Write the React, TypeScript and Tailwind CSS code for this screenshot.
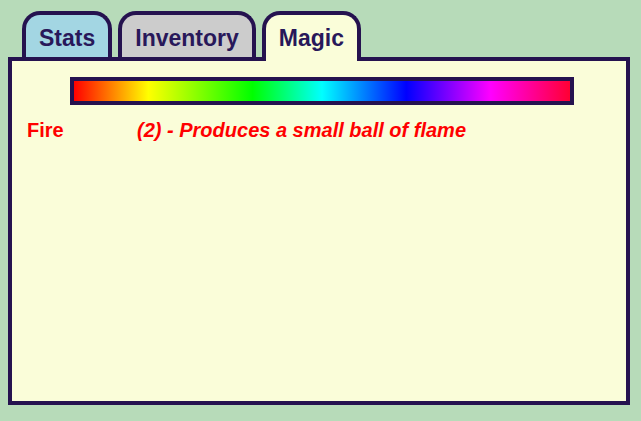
import React from 'react'

type Tab = { name: string; bg: string; active?: boolean }

const tabs: Tab[] = [
  { name: 'Stats', bg: 'bg-[#a3d6e3]' },
  { name: 'Inventory', bg: 'bg-[#cccccc]' },
  { name: 'Magic', bg: 'bg-[#fafdd9]', active: true },
]

const spells = [{ name: 'Fire', cost: 2, text: 'Produces a small ball of flame' }]

export default function App() {
  return (
    <div className="h-[421px] w-[641px] bg-[#b7dbb9] pl-[8px] pt-[11px] font-['Liberation_Sans',Arial,sans-serif]">
      <div className="ml-[14px] flex h-[46px] items-start gap-[6px]">
        {tabs.map((tab) => (
          <div
            key={tab.name}
            className={`relative z-10 rounded-t-[18px] border-4 border-b-0 border-[#25124f] px-[13px] pt-[10px] text-[23px] font-bold leading-[26px] text-[#28185a] ${tab.bg} ${
              tab.active ? 'h-[50px]' : 'h-[46px]'
            }`}
          >
            {tab.name}
          </div>
        ))}
      </div>

      <div className="h-[348px] w-[622px] border-4 border-[#25124f] bg-[#fafdd9]">
        <div className="ml-[58px] mt-[16px] h-[28px] w-[504px] border-4 border-[#25124f] bg-[linear-gradient(to_right,#ff0000_0%,#ffff00_15%,#00ff00_36%,#00ffff_50%,#0000ff_67%,#ff00ff_84%,#ff0033_100%)]" />

        {spells.map((spell) => (
          <div key={spell.name} className="mt-[14px] flex text-[20px] font-bold leading-[23px] text-[#ff0000]">
            <span className="ml-[15px] w-[110px]">{spell.name}</span>
            <span className="italic">
              ({spell.cost}) - {spell.text}
            </span>
          </div>
        ))}
      </div>
    </div>
  )
}
